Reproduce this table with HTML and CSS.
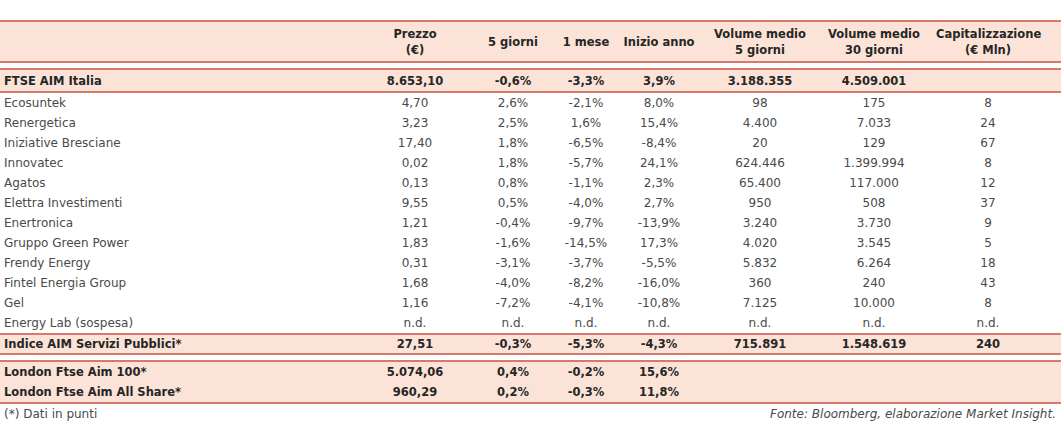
FILE: index.html
```html
<!DOCTYPE html>
<html lang="it">
<head>
<meta charset="utf-8">
<title>AIM Servizi Pubblici</title>
<link rel="stylesheet" href="styles.css">
</head>
<body>
<div class="sheet">
  <div class="row head">
    <div class="name"></div>
    <div>Prezzo<br>(€)</div>
    <div>5 giorni</div>
    <div>1 mese</div>
    <div>Inizio anno</div>
    <div>Volume medio<br>5 giorni</div>
    <div>Volume medio<br>30 giorni</div>
    <div>Capitalizzazione<br>(€ Mln)</div>
    <div></div>
  </div>

  <div class="row band index">
    <div class="name">FTSE AIM Italia</div>
    <div>8.653,10</div><div>-0,6%</div><div>-3,3%</div><div>3,9%</div><div>3.188.355</div><div>4.509.001</div><div></div><div></div>
  </div>

  <div class="body">
    <div class="row data"><div class="name">Ecosuntek</div><div>4,70</div><div>2,6%</div><div>-2,1%</div><div>8,0%</div><div>98</div><div>175</div><div>8</div><div></div></div>
    <div class="row data"><div class="name">Renergetica</div><div>3,23</div><div>2,5%</div><div>1,6%</div><div>15,4%</div><div>4.400</div><div>7.033</div><div>24</div><div></div></div>
    <div class="row data"><div class="name">Iniziative Bresciane</div><div>17,40</div><div>1,8%</div><div>-6,5%</div><div>-8,4%</div><div>20</div><div>129</div><div>67</div><div></div></div>
    <div class="row data"><div class="name">Innovatec</div><div>0,02</div><div>1,8%</div><div>-5,7%</div><div>24,1%</div><div>624.446</div><div>1.399.994</div><div>8</div><div></div></div>
    <div class="row data"><div class="name">Agatos</div><div>0,13</div><div>0,8%</div><div>-1,1%</div><div>2,3%</div><div>65.400</div><div>117.000</div><div>12</div><div></div></div>
    <div class="row data"><div class="name">Elettra Investimenti</div><div>9,55</div><div>0,5%</div><div>-4,0%</div><div>2,7%</div><div>950</div><div>508</div><div>37</div><div></div></div>
    <div class="row data"><div class="name">Enertronica</div><div>1,21</div><div>-0,4%</div><div>-9,7%</div><div>-13,9%</div><div>3.240</div><div>3.730</div><div>9</div><div></div></div>
    <div class="row data"><div class="name">Gruppo Green Power</div><div>1,83</div><div>-1,6%</div><div>-14,5%</div><div>17,3%</div><div>4.020</div><div>3.545</div><div>5</div><div></div></div>
    <div class="row data"><div class="name">Frendy Energy</div><div>0,31</div><div>-3,1%</div><div>-3,7%</div><div>-5,5%</div><div>5.832</div><div>6.264</div><div>18</div><div></div></div>
    <div class="row data"><div class="name">Fintel Energia Group</div><div>1,68</div><div>-4,0%</div><div>-8,2%</div><div>-16,0%</div><div>360</div><div>240</div><div>43</div><div></div></div>
    <div class="row data"><div class="name">Gel</div><div>1,16</div><div>-7,2%</div><div>-4,1%</div><div>-10,8%</div><div>7.125</div><div>10.000</div><div>8</div><div></div></div>
    <div class="row data"><div class="name">Energy Lab (sospesa)</div><div>n.d.</div><div>n.d.</div><div>n.d.</div><div>n.d.</div><div>n.d.</div><div>n.d.</div><div>n.d.</div><div></div></div>
  </div>

  <div class="row band sector">
    <div class="name">Indice AIM Servizi Pubblici*</div>
    <div>27,51</div><div>-0,3%</div><div>-5,3%</div><div>-4,3%</div><div>715.891</div><div>1.548.619</div><div>240</div><div></div>
  </div>

  <div class="band london">
    <div class="row lrow"><div class="name">London Ftse Aim 100*</div><div>5.074,06</div><div>0,4%</div><div>-0,2%</div><div>15,6%</div><div></div><div></div><div></div><div></div></div>
    <div class="row lrow"><div class="name">London Ftse Aim All Share*</div><div>960,29</div><div>0,2%</div><div>-0,3%</div><div>11,8%</div><div></div><div></div><div></div><div></div></div>
  </div>

  <div class="foot">
    <span class="note">(*) Dati in punti</span>
    <span class="source">Fonte: Bloomberg, elaborazione Market Insight.</span>
  </div>
</div>
</body>
</html>
```

FILE: styles.css
```css
html, body {
  margin: 0;
  padding: 0;
  background: #ffffff;
}

body {
  font-family: "DejaVu Sans", "Liberation Sans", sans-serif;
  font-size: 12px;
  color: #4a4a4a;
}

.sheet {
  width: 1061px;
  padding-top: 20px;
}

.row {
  display: grid;
  grid-template-columns: 366px 98px 98px 48px 98px 104px 124px 104px 1fr;
  align-items: center;
}

.row > div {
  text-align: center;
  white-space: nowrap;
  min-width: 0;
}

.row > .name {
  text-align: left;
  padding-left: 4px;
}

.head,
.band {
  background: #fbe4d7;
  border-top: 2px solid #d9786d;
  border-bottom: 2px solid #d9786d;
}

.head {
  height: 39px;
  font-weight: bold;
  font-size: 11.5px;
  line-height: 16px;
  color: #262626;
  margin-bottom: 5px;
}

.index {
  height: 21px;
}

.band {
  font-weight: bold;
  font-size: 11.5px;
  color: #262626;
}

.data {
  height: 20px;
  line-height: 20px;
}

.sector {
  height: 18px;
  margin-bottom: 5px;
}

.lrow {
  height: 20px;
}

.foot {
  display: flex;
  justify-content: space-between;
  align-items: center;
  height: 19px;
  padding: 0 5px 0 4px;
}

.source {
  font-style: italic;
}
```
